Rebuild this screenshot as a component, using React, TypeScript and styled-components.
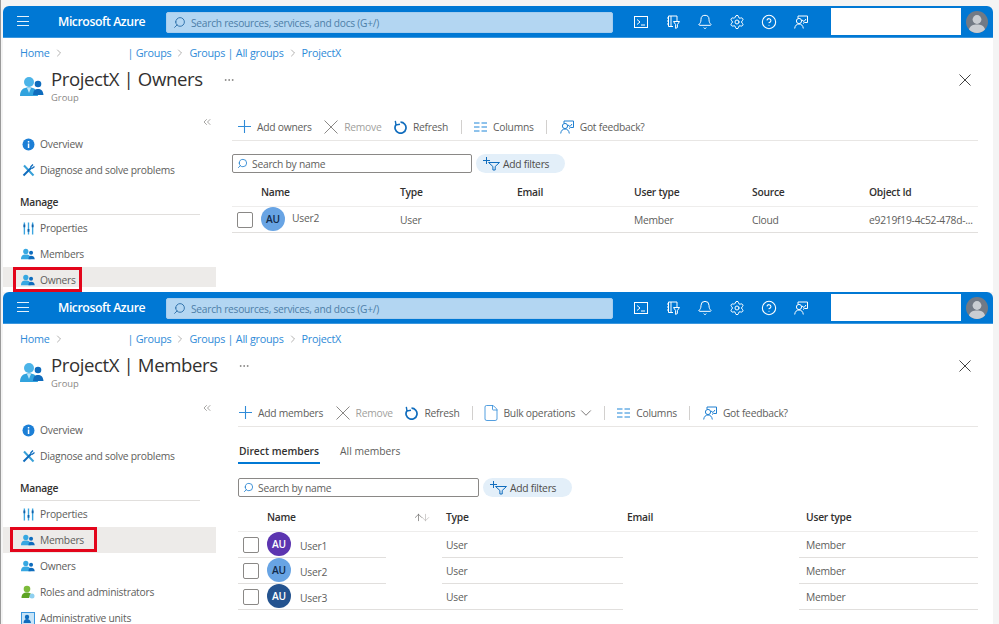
import React from "react";
import styled, { createGlobalStyle } from "styled-components";
import { Bell, Settings, CircleHelp, ChevronDown, ChevronRight, ChevronsLeft, Search, File, MoreHorizontal, ArrowUp, ArrowDown } from "lucide-react";

const Global = createGlobalStyle`
  html, body { margin: 0; padding: 0; background: #f5f5f5; }
  * { box-sizing: border-box; }
`;
const FONT = `"Open Sans", "Noto Sans", "Liberation Sans", sans-serif`;

const Page = styled.div`
  width: 999px; height: 624px; overflow: hidden; background: #f4f4f4;
  border-left: 1px solid #9a9a9a; padding: 6px 0 0 2px;
  font-family: ${FONT}; font-size: 10.3px; letter-spacing: -0.25px; color: #605e5c;
`;
const Win = styled.section<{ $h: number }>`
  width: 990px; height: ${p => p.$h}px; background: #fff; overflow: hidden;
  border-radius: 6px 6px 0 0;
`;
const Masthead = styled.header`
  height: 32px; background: #0078d4; display: flex; align-items: flex-start; color: #fff;
  border-bottom: 1px solid #3b97de;
`;
const Burger = styled.span`
  margin: 10px 0 0 14px; width: 12px; height: 10px; display: flex; flex-direction: column; justify-content: space-between;
  & > i { display: block; height: 1px; background: #e6f2fb; }
`;
const Brand = styled.span`
  margin: 7px 0 0 29px; width: 88px; font-size: 12.3px; line-height: 18px; font-weight: 600; white-space: nowrap;
  letter-spacing: -0.45px;
`;
const GlobalSearch = styled.div`
  margin: 6px 0 0 20px; width: 447px; height: 21px; background: #b3d6f2; border-radius: 2px;
  display: flex; align-items: center; padding-left: 6px; gap: 5px; color: #4d7ea8; font-size: 10.2px; border: 1px solid #a6cdee;
`;
const HeadIcons = styled.div`
  margin: 0 0 0 12px; display: flex;
`;
const HeadIcon = styled.span`
  width: 32px; height: 31px; display: flex; align-items: center; justify-content: center; color: #fff;
`;
const Account = styled.div`
  margin: 2px 0 0 14px; width: 130px; height: 27px; background: #fff;
`;
const Profile = styled.span`
  margin: 5px 0 0 5px; width: 22px; height: 22px; display: block;
`;
const Crumbs = styled.nav`
  height: 22px; padding: 8px 0 0 17px; display: flex; align-items: center; gap: 3px; color: #2f8bd8; font-size: 10.8px; line-height: 14px;
  & > svg { color: #8a8886; }
`;
const CrumbGap = styled.span`
  width: 57px;
`;
const Head = styled.div`
  margin: 8px 0 8px; height: 36px; padding: 0 22px 0 17px; display: flex; align-items: center;
`;
const HeadText = styled.div`
  margin-left: 7px; display: flex; flex-direction: column;
`;
const Title = styled.h1`
  margin: -1px 0 1px; font-size: 18.6px; line-height: 24px; font-weight: 400; color: #323130; white-space: nowrap; letter-spacing: -0.4px;
`;
const Sub = styled.div`
  font-size: 9.4px; line-height: 12px; color: #8a8886; letter-spacing: 0;
`;
const Dots = styled.span<{ $m: number }>`
  margin: 0 auto 12px ${p => p.$m}px; display: flex; color: #605e5c;
`;
const Close = styled.span`
  display: flex; color: #444; margin-bottom: 12px;
`;
const Columns = styled.div`
  display: flex;
`;
const Side = styled.aside`
  width: 213px; flex: none;
`;
const CollapseRow = styled.div`
  height: 19px; padding: 4px 3px 0 0; display: flex; justify-content: flex-end; color: #8a8886;
`;
const NavRow = styled.div<{ $on?: boolean; $short?: boolean }>`
  height: ${p => (p.$short ? 20 : 26)}px; padding-left: 17px; display: flex; align-items: flex-start;
  background: ${p => (p.$on ? "#edebe9" : "transparent")};
`;
const NavInner = styled.div<{ $l?: number; $r?: number }>`
  position: relative; height: 18px; margin-top: 4px; display: flex; align-items: center; gap: 4px; white-space: nowrap;
  ${p => p.$l !== undefined ? `
    &::after { content: ""; position: absolute; top: -4px; bottom: -3px; left: -${p.$l + 3}px; right: -${(p.$r ?? 0) + 3}px; border: 3px solid #e3051b; }
  ` : ""}
`;
const NavGlyph = styled.span`
  width: 16px; height: 16px; display: flex; align-items: center; justify-content: center; flex: none;
`;
const NavTitle = styled.div`
  margin: 0 0 0 17px; width: 180px; height: 32px; padding-top: 12px; font-weight: 600; color: #323130; line-height: 14px; border-bottom: 1px solid #e1dfdd;
`;
const Main = styled.main<{ $left: number }>`
  flex: 1; padding: 0 15px 0 ${p => p.$left}px; min-width: 0;
`;
const Toolbar = styled.div<{ $pad: number }>`
  margin-top: 1px; height: 28px; padding-left: ${p => p.$pad}px; display: flex; align-items: center; gap: 12.5px;
  border-bottom: 1px solid #e8e6e4;
`;
const Tool = styled.span<{ $off?: boolean }>`
  display: flex; align-items: center; gap: 6px; white-space: nowrap; color: ${p => (p.$off ? "#a19f9d" : "#605e5c")};
`;
const Rule = styled.span`
  width: 1px; height: 14px; background: #d2d0ce;
`;
const DocGlyph = styled.span`
  display: flex; margin: 0 -3px 0 -3px; color: #2f8bd8;
`;
const DropGlyph = styled.span`
  display: flex; margin: 0 -4px 0 -4px; color: #605e5c;
`;
const Tabs = styled.div`
  display: flex; gap: 19px;
`;
const Tab = styled.span<{ $on?: boolean }>`
  height: 37px; padding: 17px 1px 0; line-height: 14px; white-space: nowrap; letter-spacing: 0; font-weight: ${p => (p.$on ? 600 : 400)};
  color: ${p => (p.$on ? "#323130" : "#605e5c")}; border-bottom: 2px solid ${p => (p.$on ? "#0078d4" : "transparent")};
`;
const FilterBar = styled.div<{ $top: number }>`
  margin-top: ${p => p.$top}px; display: flex; gap: 4px;
`;
const SearchBox = styled.div<{ $w: number }>`
  width: ${p => p.$w}px; height: 19px; border: 1px solid #8a8886; border-radius: 2px; display: flex; align-items: center;
  padding-left: 4px; gap: 4px; color: #605e5c;
`;
const Pill = styled.div`
  width: 89px; height: 19px; border-radius: 10px; background: #e3eff9; display: flex; align-items: center; gap: 2px; padding-left: 6px; color: #4e4c4a;
`;
const HeadRow = styled.div<{ $cols: string; $top: number }>`
  margin-top: ${p => p.$top}px; height: 29px; display: grid; grid-template-columns: ${p => p.$cols}; align-items: center;
  border-bottom: 1px solid #eeedec; font-weight: 600; color: #323130; white-space: nowrap;
`;
const NameHead = styled.span`
  display: flex; align-items: center; justify-content: space-between; padding-right: 15px; color: #323130;
`;
const SortArrows = styled.span`
  display: flex; color: #605e5c;
  & > svg + svg { margin-left: -4px; color: #b5b3b1; }
`;
const OwnerRow = styled.div<{ $cols: string }>`
  height: 26px; display: grid; grid-template-columns: ${p => p.$cols}; align-items: center; border-bottom: 1px solid #e1dfdd; white-space: nowrap;
`;
const MemberRow = styled.div`
  height: 26px; display: grid; grid-template-columns: 148px 56px 181px 176px 179px; white-space: nowrap;
`;
const Cell = styled.div<{ $line?: boolean; $pad?: number }>`
  display: flex; align-items: center; padding-left: ${p => p.$pad ?? 0}px;
  border-bottom: 1px solid ${p => (p.$line ? "#e1dfdd" : "transparent")};
`;
const NameCell = styled(Cell)`
  align-items: flex-start;
`;
const Check = styled.span<{ $x: number; $top: number }>`
  width: 16px; height: 16px; flex: none; margin: ${p => p.$top}px 0 0 ${p => p.$x}px; border: 1px solid #8a8886; border-radius: 2px; background: #fff;
`;
const Avatar = styled.span<{ $bg: string; $dark?: boolean; $x: number }>`
  width: 24px; height: 24px; flex: none; border-radius: 50%; margin-left: ${p => p.$x}px; background: ${p => p.$bg};
  color: ${p => (p.$dark ? "#102a4a" : "#fff")}; font-size: 10.2px; font-weight: 600; display: flex; align-items: center; justify-content: center;
`;
const UserName = styled.span<{ $x: number; $top: number }>`
  margin: ${p => p.$top}px 0 0 ${p => p.$x}px; line-height: 14px;
`;
const OwnerName = styled.div`
  display: flex; align-items: flex-start; height: 25px;
`;

const Cross = ({ s, c, w = 1 }: { s: number; c: string; w?: number }) => (
  <svg width={s} height={s} viewBox={`0 0 ${s} ${s}`} fill="none" stroke={c} strokeWidth={w}><path d={`M.5 .5 ${s - .5} ${s - .5}M${s - .5} .5 .5 ${s - .5}`} /></svg>
);
const PlusArt = () => (
  <svg width="13" height="13" viewBox="0 0 13 13" fill="none" stroke="#2f8bd8" strokeWidth="1.1"><path d="M6.500 0v13M0 6.500h13" /></svg>
);
const RefreshArt = () => (
  <svg width="13" height="14" viewBox="0 0 13 14" fill="none" stroke="#0f6cbd" strokeWidth="1.700"><path d="M6.500 2.200A5.500 5.500 0 1 1 1.900 4.700" /><path d="M1.300 .8 2 4.900l4-.6" strokeWidth="1.400" /></svg>
);
const CloudShell = () => (
  <svg width="14" height="12" viewBox="0 0 14 12" fill="none" stroke="#fff" strokeWidth="1"><rect x=".5" y=".5" width="13" height="11" /><path d="M3 3.500 6 6 3 8.500M7 9h4" /></svg>
);
const DirFilter = () => (
  <svg width="14" height="14" viewBox="0 0 14 14" fill="none" stroke="#fff" strokeWidth="1"><path d="M2.500 1H11v5M2.500 1v10.500H7M5 1v10.500M1 3h1.500M1 6h1.500M1 9h1.500" /><path d="M7.500 6.500h6L11.400 9.600v2.900l-1.800.9V9.600z" /></svg>
);
const Feedback = ({ c = "#fff" }: { c?: string }) => (
  <svg width="14" height="14" viewBox="0 0 14 14" fill="none" stroke={c} strokeWidth="1"><path d="M4 3V1h9.500v6.500h-3l-1.500 1" /><circle cx="5" cy="6" r="2.600" /><path d="M.7 13.500C1 10.500 2.700 9 5 9s4 1.500 4.300 4.500" /><path d="M8 5l2 1.500L12 4" /></svg>
);
const ProfileArt = () => (
  <svg width="22" height="22" viewBox="0 0 22 22"><circle cx="11" cy="11" r="11" fill="#727a85" /><circle cx="11" cy="8.500" r="4.400" fill="#c9cdd2" /><path d="M3 18.500C4 14.500 7 13.500 11 13.500s7 1 8 5a11 11 0 0 1-16 0z" fill="#c9cdd2" /></svg>
);
const GroupArt = () => (
  <svg width="24" height="20" viewBox="0 0 24 20"><circle cx="9" cy="6" r="5" fill="#4cb4e8" /><path d="M0 20c0-6 3-8.500 9-8.500s8 2.500 9 8.500z" fill="#31a3de" /><path d="M7 12h4l-2 5z" fill="#bfe6f8" /><circle cx="18" cy="8" r="3.300" fill="#0f6cbd" /><path d="M13 19c.3-4.500 2-6 5-6s5 1.500 5.500 6z" fill="#0f6cbd" /></svg>
);
const PeopleArt = () => (
  <svg width="14" height="12" viewBox="0 0 16 13"><circle cx="5.500" cy="3.500" r="3" fill="#37a8e2" /><path d="M0 12.500c0-4 2-5.500 5.500-5.500s5.500 1.500 5.500 5.500z" fill="#37a8e2" /><circle cx="11.500" cy="5" r="2.300" fill="#0f6cbd" /><path d="M8.500 12.500c.2-3 1-4 3-4s4 1 4.200 4z" fill="#0f6cbd" /></svg>
);
const InfoArt = () => (
  <svg width="13" height="13" viewBox="0 0 13 13"><circle cx="6.500" cy="6.500" r="6" fill="#1c7fd6" /><rect x="5.800" y="5.500" width="1.500" height="4.500" fill="#fff" /><rect x="5.800" y="3" width="1.500" height="1.500" fill="#fff" /></svg>
);
const ToolsArt = () => (
  <svg width="13" height="13" viewBox="0 0 13 13" fill="none"><path d="M2 1.500 11.500 11.500" stroke="#37a0d8" strokeWidth="2" /><path d="M1.500 11.500 9.500 3.500" stroke="#0f6cbd" strokeWidth="2" /><path d="M8.500 3l2.500-2.500M10 4.500l2.500-2" stroke="#0f6cbd" strokeWidth="1.300" /></svg>
);
const PropsArt = () => (
  <svg width="11" height="13" viewBox="0 0 12 13" fill="none"><path d="M1.500 0v13M6 0v13M10.500 0v13" stroke="#3aa5e0" strokeWidth="1.500" /><path d="M1.500 2v3M6 7v3M10.500 2v3" stroke="#0f5fa8" strokeWidth="2" /></svg>
);
const RolesArt = () => (
  <svg width="14" height="14" viewBox="0 0 14 14"><circle cx="6" cy="4" r="3.300" fill="#7dbb3a" /><path d="M.5 13c0-4 2-5.500 5.500-5.500 2 0 3 .5 4 1.500L8 13z" fill="#5da423" /><circle cx="11" cy="11" r="2.500" fill="#8fd0f0" /></svg>
);
const UnitsArt = () => (
  <svg width="14" height="13" viewBox="0 0 14 13"><rect x=".5" y=".5" width="13" height="12" fill="#c7e4f7" stroke="#3a96dd" /><circle cx="6" cy="5" r="2.200" fill="#0f6cbd" /><path d="M2.500 11c.3-3 1.500-4 3.500-4s3.500 1 4 4z" fill="#0f6cbd" /></svg>
);
const ColumnsArt = () => (
  <svg width="13" height="10" viewBox="0 0 13 10" fill="none" stroke="#1f86d8" strokeWidth="1"><path d="M0 1h5.500M7.500 1H13M0 5h5.500M7.500 5H13M0 9h5.500M7.500 9H13" /></svg>
);
const FilterArt = () => (
  <svg width="19" height="14" viewBox="0 0 19 14" fill="none" stroke="#0f6cbd" strokeWidth="1"><path d="M1 3.500h7M4.500 0v7" /><path d="M6.500 5.500h11l-4.300 4v3.500h-2.300V9.500z" /></svg>
);

const SideNav = ({ active, markL, markR, short, more }: { active: string; markL: number; markR: number; short?: boolean; more?: boolean }) => {
  const row = (name: string, art: React.ReactNode) => {
    const on = name === active;
    return (
      <NavRow key={name} $on={on} $short={on && short}>
        <NavInner $l={on ? markL : undefined} $r={on ? markR : undefined}>
          <NavGlyph>{art}</NavGlyph>
          <span>{name}</span>
        </NavInner>
      </NavRow>
    );
  };
  return (
    <Side>
      <CollapseRow><ChevronsLeft size={12} strokeWidth={1.5} /></CollapseRow>
      <NavRow><NavInner><NavGlyph><InfoArt /></NavGlyph><span>Overview</span></NavInner></NavRow>
      <NavRow><NavInner><NavGlyph><ToolsArt /></NavGlyph><span>Diagnose and solve problems</span></NavInner></NavRow>
      <NavTitle>Manage</NavTitle>
      {row("Properties", <PropsArt />)}
      {row("Members", <PeopleArt />)}
      {row("Owners", <PeopleArt />)}
      {more && row("Roles and administrators", <RolesArt />)}
      {more && row("Administrative units", <UnitsArt />)}
    </Side>
  );
};

const Frame = ({ h, title, dots, children }: { h: number; title: string; dots: number; children: React.ReactNode }) => (
  <Win $h={h}>
    <Masthead>
      <Burger><i /><i /><i /></Burger>
      <Brand>Microsoft Azure</Brand>
      <GlobalSearch>
        <Search size={13} strokeWidth={1.7} color="#2a6ea8" style={{ transform: "scaleX(-1)" }} />
        <span>Search resources, services, and docs (G+/)</span>
      </GlobalSearch>
      <HeadIcons>
        <HeadIcon><CloudShell /></HeadIcon>
        <HeadIcon><DirFilter /></HeadIcon>
        <HeadIcon><Bell size={16} strokeWidth={1.5} /></HeadIcon>
        <HeadIcon><Settings size={16} strokeWidth={1.5} /></HeadIcon>
        <HeadIcon><CircleHelp size={16} strokeWidth={1.6} /></HeadIcon>
        <HeadIcon><Feedback /></HeadIcon>
      </HeadIcons>
      <Account />
      <Profile><ProfileArt /></Profile>
    </Masthead>
    <Crumbs>
      <span>Home</span>
      <ChevronRight size={12} strokeWidth={1.3} />
      <CrumbGap />
      <span>| Groups</span>
      <ChevronRight size={12} strokeWidth={1.3} />
      <span>Groups | All groups</span>
      <ChevronRight size={12} strokeWidth={1.3} />
      <span>ProjectX</span>
    </Crumbs>
    <Head>
      <GroupArt />
      <HeadText>
        <Title>{title}</Title>
        <Sub>Group</Sub>
      </HeadText>
      <Dots $m={dots}><MoreHorizontal size={12} strokeWidth={1.2} /></Dots>
      <Close><Cross s={12} c="#444" /></Close>
    </Head>
    <Columns>{children}</Columns>
  </Win>
);

const Bar = ({ add, bulk, pad }: { add: string; bulk?: boolean; pad: number }) => (
  <Toolbar $pad={pad}>
    <Tool><PlusArt />{add}</Tool>
    <Tool $off><Cross s={14} c="#8a8886" />Remove</Tool>
    <Tool><RefreshArt />Refresh</Tool>
    <Rule />
    {bulk && <Tool><DocGlyph><File size={18} strokeWidth={1.1} /></DocGlyph>Bulk operations<DropGlyph><ChevronDown size={18} strokeWidth={1.1} /></DropGlyph></Tool>}
    {bulk && <Rule />}
    <Tool><ColumnsArt />Columns</Tool>
    <Rule />
    <Tool><Feedback c="#1f7fd0" />Got feedback?</Tool>
  </Toolbar>
);

const Filters = ({ w, top }: { w: number; top: number }) => (
  <FilterBar $top={top}>
    <SearchBox $w={w}>
      <Search size={11} strokeWidth={1.8} color="#1f7fd0" style={{ transform: "scaleX(-1)" }} />
      Search by name
    </SearchBox>
    <Pill><FilterArt />Add filters</Pill>
  </FilterBar>
);

const ownerCols = "29px 139px 117px 117px 118px 117px 109px";
const users = [
  { n: "User1", bg: "#5c35b0" },
  { n: "User2", bg: "#68a4e4", dark: true },
  { n: "User3", bg: "#24538f" },
];

export default function App() {
  return (
    <Page>
      <Global />
      <Frame h={286} title="ProjectX | Owners" dots={20}>
        <SideNav active="Owners" markL={4} markR={3} short />
        <Main $left={16}>
          <Bar add="Add owners" pad={6} />
          <Filters w={240} top={13} />
          <HeadRow $cols={ownerCols} $top={5}>
            <span /><span>Name</span><span>Type</span><span>Email</span><span>User type</span><span>Source</span><span>Object Id</span>
          </HeadRow>
          <OwnerRow $cols={ownerCols}>
            <Check $x={5} $top={0} />
            <OwnerName>
              <Avatar $bg="#68a4e4" $dark $x={0}>AU</Avatar>
              <UserName $x={7} $top={4}>User2</UserName>
            </OwnerName>
            <span>User</span><span /><span>Member</span><span>Cloud</span><span>e9219f19-4c52-478d-...</span>
          </OwnerRow>
        </Main>
      </Frame>
      <Frame h={332} title="ProjectX | Members" dots={20}>
        <SideNav active="Members" markL={7} markR={10} more />
        <Main $left={22}>
          <Bar add="Add members" bulk pad={1} />
          <Tabs><Tab $on>Direct members</Tab><Tab>All members</Tab></Tabs>
          <Filters w={241} top={14} />
          <HeadRow $cols="29px 179px 181px 179px 172px" $top={6}>
            <span />
            <NameHead>Name<SortArrows><ArrowUp size={11} strokeWidth={1.4} /><ArrowDown size={11} strokeWidth={1.4} /></SortArrows></NameHead>
            <span>Type</span><span>Email</span><span>User type</span>
          </HeadRow>
          {users.map((u, i) => (
            <MemberRow key={u.n}>
              <NameCell $line>
                <Check $x={5} $top={5} />
                <Avatar $bg={u.bg} $dark={u.dark} $x={8}>AU</Avatar>
                <UserName $x={9} $top={7}>{u.n}</UserName>
              </NameCell>
              <Cell $line={i === 2} />
              <Cell $line $pad={4}>User</Cell>
              <Cell />
              <Cell $line $pad={7}>Member</Cell>
            </MemberRow>
          ))}
        </Main>
      </Frame>
    </Page>
  );
}
